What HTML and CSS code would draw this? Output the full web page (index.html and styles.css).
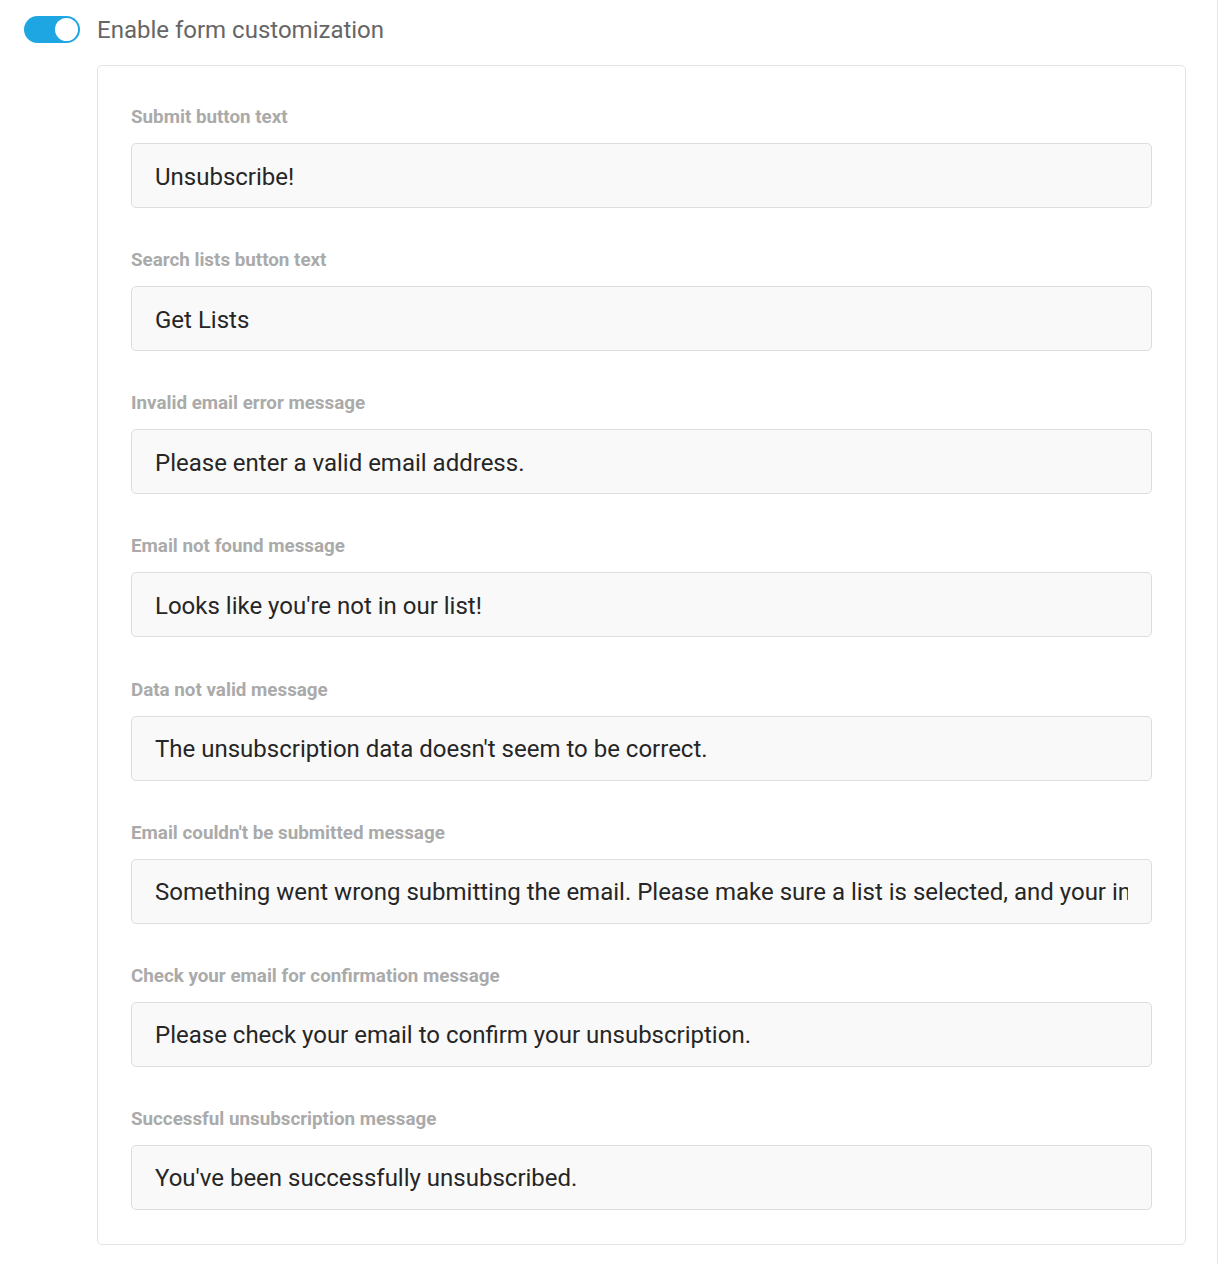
FILE: index.html
```html
<!DOCTYPE html>
<html lang="en">
<head>
    <meta charset="UTF-8">
    <meta name="viewport" content="width=device-width, initial-scale=1.0">
    <title>Form customization</title>
    <link rel="stylesheet" href="styles.css">
</head>
<body>
    <div class="page">
        <div class="toggle-row">
            <span class="toggle on"><span class="knob"></span></span>
            <span class="toggle-label">Enable form customization</span>
        </div>

        <div class="card">
            <div class="field">
                <label for="submit-text">Submit button text</label>
                <input type="text" id="submit-text" value="Unsubscribe!">
            </div>
            <div class="field">
                <label for="search-text">Search lists button text</label>
                <input type="text" id="search-text" value="Get Lists">
            </div>
            <div class="field">
                <label for="invalid-email">Invalid email error message</label>
                <input type="text" id="invalid-email" value="Please enter a valid email address.">
            </div>
            <div class="field">
                <label for="not-found">Email not found message</label>
                <input type="text" id="not-found" value="Looks like you're not in our list!">
            </div>
            <div class="field">
                <label for="not-valid">Data not valid message</label>
                <input type="text" id="not-valid" value="The unsubscription data doesn't seem to be correct.">
            </div>
            <div class="field">
                <label for="not-submitted">Email couldn't be submitted message</label>
                <input type="text" id="not-submitted" value="Something went wrong submitting the email. Please make sure a list is selected, and your information is correct.">
            </div>
            <div class="field">
                <label for="confirm">Check your email for confirmation message</label>
                <input type="text" id="confirm" value="Please check your email to confirm your unsubscription.">
            </div>
            <div class="field">
                <label for="success">Successful unsubscription message</label>
                <input type="text" id="success" value="You've been successfully unsubscribed.">
            </div>
        </div>
    </div>
</body>
</html>
```

FILE: styles.css
```css
body {
    font-family: Roboto, 'Liberation Sans', sans-serif;
    background-color: #FFFFFF;
    margin: 0;
}

.page {
    width: 1218px;
    min-height: 1264px;
    border-right: 1px solid #E6E6E6;
    padding: 16px 0 0 24px;
    box-sizing: border-box;
}

.toggle-row {
    display: flex;
    align-items: center;
    gap: 17px;
    height: 27px;
}

.toggle {
    display: flex;
    align-items: center;
    justify-content: flex-end;
    width: 56px;
    height: 27px;
    padding: 2px;
    border-radius: 14px;
    background-color: #1DA6E2;
    box-sizing: border-box;
}

.knob {
    width: 23px;
    height: 23px;
    border-radius: 50%;
    background-color: #FFFFFF;
}

.toggle-label {
    font-size: 24px;
    color: #666666;
}

.card {
    margin: 22px 0 0 73px;
    width: 1089px;
    border: 1px solid #E4E4E4;
    border-radius: 5px;
    padding: 38px 33px 34px;
    box-sizing: border-box;
}

.field {
    display: flex;
    flex-direction: column;
}

.field + .field {
    margin-top: 39.15px;
}

.field label {
    font-size: 18.8px;
    font-weight: 700;
    line-height: 27px;
    color: #AAAAAA;
    margin-bottom: 12px;
}

.field input {
    height: 65px;
    padding: 2px 23px 0;
    border: 1px solid #DDDDDD;
    border-radius: 5px;
    background-color: #F9F9F9;
    font-family: Roboto, 'Liberation Sans', sans-serif;
    font-size: 24px;
    color: #262626;
    box-sizing: border-box;
    outline: none;
}
```
